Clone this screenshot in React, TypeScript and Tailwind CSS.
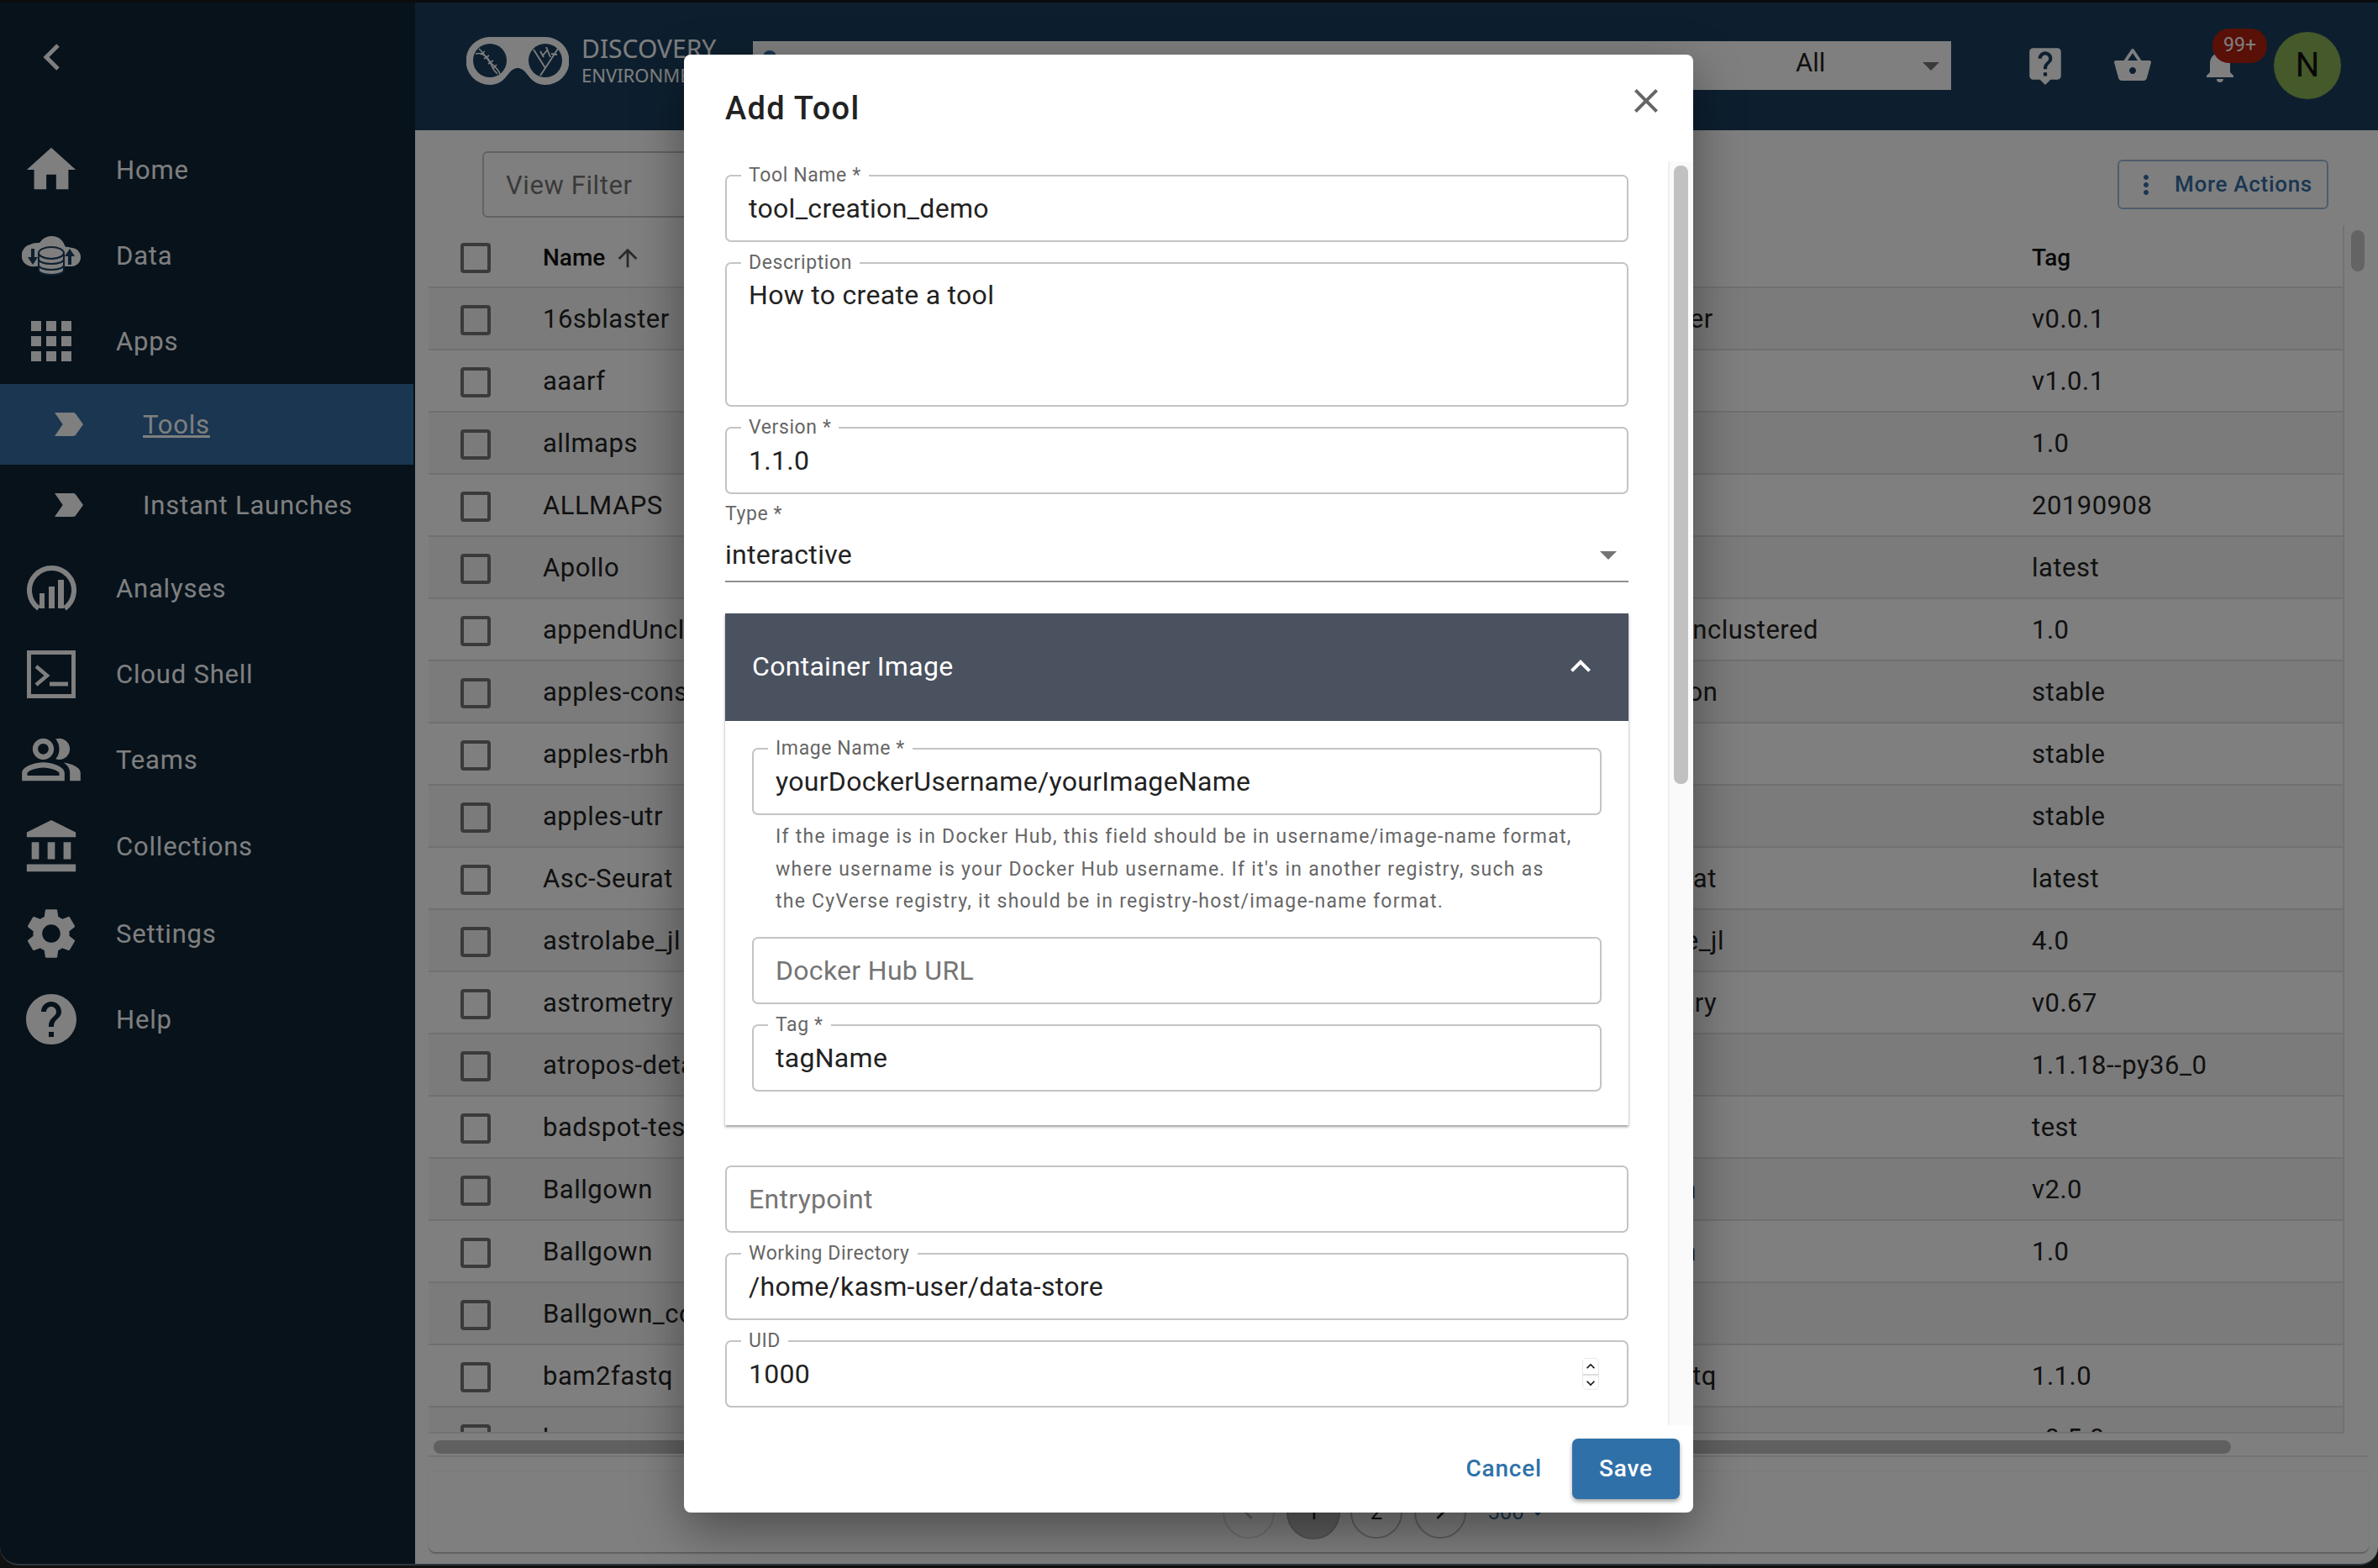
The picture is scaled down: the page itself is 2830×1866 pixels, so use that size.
import React from "react";
import {
  MdHome, MdApps, MdHelp, MdSettings, MdAccountBalance, MdOutlinePeopleAlt, MdLabelImportant,
  MdLiveHelp, MdShoppingBasket, MdNotifications, MdArrowUpward, MdClose, MdMoreVert, MdExpandLess,
  MdArrowDropDown, MdKeyboardArrowUp, MdKeyboardArrowDown, MdChevronLeft, MdChevronRight,
} from "react-icons/md";

const rows: [string, string, string][] = [
  ["16sblaster", "16sblaster", "v0.0.1"],
  ["aaarf", "", "v1.0.1"],
  ["allmaps", "", "1.0"],
  ["ALLMAPS", "", "20190908"],
  ["Apollo", "", "latest"],
  ["appendUnclustered", "appendUnclustered", "1.0"],
  ["apples-consensus", "apples-con", "stable"],
  ["apples-rbh", "", "stable"],
  ["apples-utr", "", "stable"],
  ["Asc-Seurat", "Asc-Seurat", "latest"],
  ["astrolabe_jl", "astrolabe_jl", "4.0"],
  ["astrometry", "astrometry", "v0.67"],
  ["atropos-details", "", "1.1.18--py36_0"],
  ["badspot-test", "", "test"],
  ["Ballgown", "Ballgown", "v2.0"],
  ["Ballgown", "Ballgown", "1.0"],
  ["Ballgown_container", "", ""],
  ["bam2fastq", "bam2fastq", "1.1.0"],
  ["barrnap", "", "v0.5.0"],
];

function Logo() {
  return (
    <svg width="122" height="58" viewBox="0 0 122 58" className="mb-[11px] shrink-0">
      <path fill="#fff" d="M28 0H94A28 28 0 0 1 94 57C84 57 78 52 72 44C68 39 65 37 61 37C57 37 54 39 50 44C44 52 38 57 28 57A28 28 0 0 1 28 0Z" />
      <circle cx="28" cy="28" r="20" fill="#1a3e5e" />
      <circle cx="94" cy="28" r="20" fill="#1a3e5e" />
      <g stroke="#fff" strokeWidth="1.6" fill="none">
        <path d="M15 14C22 20 24 26 28 30C32 34 38 38 40 44" />
        <path d="M11 20C18 18 22 22 26 26C30 32 30 38 37 44" />
        <path d="M17 21L22 17M21 26L27 22M26 32L32 28M31 38L36 33" />
      </g>
      <g stroke="#fff" strokeWidth="1.8" fill="none">
        <path d="M88 46L109 14" />
        <path d="M80 15L94 37M88 17L92 24M95 12L100 24M101 20L108 21M91 22L96 16" />
      </g>
    </svg>
  );
}

function DataIcon() {
  return (
    <svg width="70" height="47" viewBox="0 0 70 47">
      <path fill="#fff" d="M16 36A12 12 0 0 1 10 10C14 8 17 8 21 8C26 1 31 0 36 0C44 0 49 5 52 13C55 12 58 14 60 14A11 11 0 0 1 58 36Z" />
      <path fill="#1a3e5e" d="M11 15h4v10h4l-6 9l-6-9h4zM59 34h-4v-10h-4l6-9l6 9h-4z" />
      <ellipse cx="35" cy="20" rx="15" ry="7" fill="#fff" stroke="#1a3e5e" strokeWidth="2" />
      <path fill="#fff" stroke="#1a3e5e" strokeWidth="2" d="M20 20V40C20 44 27 46 35 46C43 46 50 44 50 40V20C50 24 43 27 35 27C27 27 20 24 20 20Z" />
      <path fill="none" stroke="#1a3e5e" strokeWidth="2" d="M20 27C20 31 27 33 35 33C43 33 50 31 50 27M20 34C20 38 27 40 35 40C43 40 50 38 50 34" />
    </svg>
  );
}

function AnalysesIcon() {
  return (
    <svg width="59" height="59" viewBox="0 0 59 59">
      <path fill="none" stroke="#fff" strokeWidth="6" d="M14 53A26.5 26.5 0 1 1 45 53" />
      <path fill="#fff" d="M15 35h6v18h-6zM26 27h7v26h-7zM37 19h7v34h-7z" />
    </svg>
  );
}

function ShellIcon() {
  return (
    <svg width="58" height="57" viewBox="0 0 58 57">
      <rect x="2.5" y="2.5" width="53" height="52" fill="none" stroke="#fff" strokeWidth="5" />
      <path fill="none" stroke="#fff" strokeWidth="4.5" d="M11 19L24 30L11 41" />
      <path fill="none" stroke="#fff" strokeWidth="5" d="M27 40H49" />
    </svg>
  );
}

function NavItem({ icon, label, tall }: { icon: React.ReactNode; label: string; tall?: boolean }) {
  return (
    <div className={tall ? "flex h-[105px] items-center" : "flex h-[102px] items-center"}>
      <div className="flex w-[122px] justify-center">{icon}</div>
      <span className="ml-[16px] mt-[2px] text-[31px] tracking-[0.8px] text-white">{label}</span>
    </div>
  );
}

function SubItem({ label, active }: { label: string; active?: boolean }) {
  return (
    <div className={active ? "flex h-[96px] w-[492px] items-center bg-[#346ca2] pl-[58px]" : "flex h-[96px] w-[492px] items-center pl-[58px]"}>
      <MdLabelImportant size={48} color="#fff" />
      <span className={active ? "ml-[64px] mt-[2px] text-[31px] tracking-[0.8px] text-white underline" : "ml-[64px] mt-[2px] text-[31px] tracking-[0.8px] text-white"}>{label}</span>
    </div>
  );
}

function Checkbox() {
  return <div className="h-[36px] w-[36px] rounded-[4px] border-[4px] border-[#757575]" />;
}

function TableRow({ name, mid, tag, odd }: { name: string; mid: string; tag: string; odd: boolean }) {
  return (
    <div className={odd ? "flex h-[74px] shrink-0 items-center border-b-2 border-[#e0e0e0] bg-[#f6f6f6] pt-[3px] text-[31px] tracking-[0.5px] text-[#222]" : "flex h-[74px] shrink-0 items-center border-b-2 border-[#e0e0e0] pt-[3px] text-[31px] tracking-[0.5px] text-[#222]"}>
      <div className="w-[136px] pl-[38px]"><Checkbox /></div>
      <div className="w-[1242px] whitespace-nowrap">{name}</div>
      <div className="w-[530px] whitespace-nowrap">{mid}</div>
      <div className="whitespace-nowrap">{tag}</div>
    </div>
  );
}

function Field({ label, value, placeholder, tall, right }: { label?: string; value?: string; placeholder?: string; tall?: boolean; right?: React.ReactNode }) {
  return (
    <div className={tall ? "relative h-[172px] rounded-[7px] border-2 border-[#c4c4c4] px-[26px] pt-[13px]" : "relative flex h-[80px] items-center justify-between rounded-[7px] border-2 border-[#c4c4c4] px-[26px]"}>
      {label ? <span className="absolute left-[17px] top-[-14px] bg-white px-[9px] text-[23px] leading-[26px] tracking-[0.6px] text-[#666] whitespace-nowrap">{label}</span> : null}
      {placeholder ? <span className="text-[32px] tracking-[0.3px] text-[#757575]">{placeholder}</span> : <span className="text-[32px] tracking-[0.3px] text-[#222]">{value}</span>}
      {right}
    </div>
  );
}

function Spinner() {
  return (
    <div className="mr-[7px] flex h-[38px] w-[20px] flex-col items-center justify-between overflow-hidden rounded-[5px] border border-[#e8e8e8] bg-white text-[#111]">
      <MdKeyboardArrowUp size={20} className="-my-[1px] shrink-0" />
      <div className="h-[2px] w-full shrink-0 bg-[#ddd]" />
      <MdKeyboardArrowDown size={20} className="-my-[1px] shrink-0" />
    </div>
  );
}

export default function App() {
  return (
    <div className="relative h-[1866px] w-[2830px] overflow-hidden bg-[#222] font-[family-name:Roboto,sans-serif]">
      <div className="flex h-[1863px] w-full overflow-hidden rounded-b-[22px] border-t-[3px] border-b-2 border-t-[#16181a] border-b-[#5f6c78] bg-white">
        {/* Sidebar */}
        <aside className="w-[494px] shrink-0 bg-[#0e2436]">
          <div className="flex h-[148px] items-start pl-[50px] pt-[48px]">
            <svg width="22" height="34" viewBox="0 0 22 34"><path d="M19 3L5 17L19 31" fill="none" stroke="#fff" strokeWidth="5" /></svg>
          </div>
          <NavItem icon={<MdHome size={70} color="#fff" />} label="Home" />
          <NavItem icon={<DataIcon />} label="Data" />
          <NavItem icon={<MdApps size={72} color="#fff" />} label="Apps" />
          <SubItem label="Tools" active />
          <SubItem label="Instant Launches" />
          <NavItem icon={<AnalysesIcon />} label="Analyses" />
          <NavItem icon={<ShellIcon />} label="Cloud Shell" />
          <NavItem icon={<MdOutlinePeopleAlt size={76} color="#fff" />} label="Teams" />
          <NavItem tall icon={<MdAccountBalance size={70} color="#fff" />} label="Collections" />
          <NavItem icon={<MdSettings size={72} color="#fff" />} label="Settings" />
          <NavItem icon={<MdHelp size={72} color="#fff" />} label="Help" />
        </aside>

        {/* Main */}
        <main className="flex min-w-0 flex-1 flex-col">
          <header className="flex h-[152px] shrink-0 items-center bg-[#1a3e5e] pb-[2px] pl-[61px]">
            <Logo />
            <div className="mb-[13px] ml-[15px] w-[204px] whitespace-nowrap font-[family-name:'Noto_Sans',sans-serif] text-white">
              <div className="text-[30px] leading-[34px]">DISCOVERY</div>
              <div className="text-[22px] leading-[28px]">ENVIRONMENT</div>
            </div>
            <div className="relative flex h-[58px] w-[1426px] items-center bg-white">
              <div className="absolute left-[12px] top-[11px] h-[22px] w-[16px] rounded-full bg-[#346ca2]" />
              <span className="mb-[6px] ml-[1241px] text-[31px] text-[#222]">All</span>
              <MdArrowDropDown size={48} color="#757575" className="ml-auto" />
            </div>
            <MdLiveHelp size={50} color="#fff" className="ml-[87px]" />
            <MdShoppingBasket size={48} color="#fff" className="ml-[55px]" />
            <div className="relative ml-[56px]">
              <MdNotifications size={48} color="#fff" />
              <span className="absolute left-[15px] top-[-20px] flex h-[41px] w-[65px] items-center justify-center rounded-[20px] bg-[#b0200e] text-[23px] text-white">99+</span>
            </div>
            <div className="ml-[40px] flex h-[80px] w-[80px] items-center justify-center rounded-full bg-[#8bb255] text-[40px] text-[#111]">N</div>
          </header>

          <div className="flex min-h-0 flex-1 flex-col pl-[16px] pr-[11px]">
            <div className="flex h-[113px] shrink-0 items-start justify-between">
              <div className="ml-[64px] mt-[25px] flex h-[79px] w-[700px] items-center rounded-[6px] border-2 border-[#c4c4c4] pl-[26px] pt-[4px] text-[31px] tracking-[0.6px] text-[#757575]">View Filter</div>
              <div className="mr-[48px] mt-[35px] flex h-[59px] w-[251px] items-center rounded-[6px] border-2 border-[#9fbbd6] pl-[14px] text-[26px] font-medium tracking-[0.7px] text-[#346ca2]">
                <MdMoreVert size={36} className="mr-[16px]" />
                More Actions
              </div>
            </div>

            <div className="flex h-[1466px] shrink-0 flex-col border-b-2 border-[#e8e8e8]">
              <div className="flex min-h-0">
                <div className="flex h-[1438px] w-[2280px] flex-col overflow-hidden border-b-2 border-r-2 border-[#e4e4e4]">
                  <div className="flex h-[75px] shrink-0 items-center border-b-2 border-[#e0e0e0] pt-[5px] text-[28px] font-medium text-[#111]">
                    <div className="w-[136px] pl-[38px]"><Checkbox /></div>
                    <div className="flex w-[1242px] items-center">Name<MdArrowUpward size={34} className="ml-[10px] text-[#555]" /></div>
                    <div className="w-[530px]" />
                    <div>Tag</div>
                  </div>
                  {rows.map((r, i) => (
                    <TableRow key={i} name={r[0]} mid={r[1]} tag={r[2]} odd={i % 2 === 0} />
                  ))}
                </div>
                <div className="flex-1 pl-[8px] pt-[6px]">
                  <div className="h-[49px] w-[16px] rounded-[8px] bg-[#c8c8c8]" />
                </div>
              </div>
              <div className="ml-[6px] mt-[8px] h-[16px] w-[2139px] rounded-[8px] bg-[#c1c1c1]" />
            </div>

            <div className="mt-[16px] flex h-[97px] shrink-0 items-center justify-center rounded-b-[8px] border-t-2 border-t-[#f8f8f8] pr-[28px] shadow-[0_2px_1px_rgba(0,0,0,0.25)]">
              <div className="flex h-[62px] w-[62px] items-center justify-center rounded-full border-2 border-[#e0e0e0] text-[#bbb]"><MdChevronLeft size={32} /></div>
              <div className="ml-[14px] flex h-[64px] w-[64px] items-center justify-center rounded-full border-2 border-[#aaa] bg-[#bdbdbd] text-[26px] text-[#222]">1</div>
              <div className="ml-[12px] flex h-[62px] w-[62px] items-center justify-center rounded-full border-2 border-[#bfbfbf] text-[26px] text-[#222]">2</div>
              <div className="ml-[14px] flex h-[62px] w-[62px] items-center justify-center rounded-full border-2 border-[#bfbfbf] text-[#222]"><MdChevronRight size={32} /></div>
              <span className="ml-[25px] text-[26px] text-[#346ca2]">500</span>
              <MdArrowDropDown size={32} className="text-[#346ca2]" />
            </div>
          </div>
        </main>
      </div>

      {/* Dim overlay */}
      <div className="absolute inset-0 bg-black/50" />

      {/* Dialog */}
      <div className="absolute left-[814px] top-[65px] flex h-[1735px] w-[1201px] flex-col overflow-hidden rounded-[8px] bg-white shadow-[0_20px_60px_rgba(0,0,0,0.4)]">
        <div className="flex h-[127px] shrink-0 items-start justify-between pl-[49px] pr-[32px]">
          <span className="mt-[39px] text-[38px] font-medium leading-[50px] tracking-[1.3px] text-[#222]">Add Tool</span>
          <MdClose size={48} color="#666" className="mt-[31px]" />
        </div>

        <div className="flex min-h-0 flex-1">
          <div className="w-[1171px] shrink-0 overflow-hidden pl-[49px] pr-[47px] pt-[16px]">
            <Field label="Tool Name *" value="tool_creation_demo" />
            <div className="mt-[24px]"><Field tall label="Description" value="How to create a tool" /></div>
            <div className="mt-[24px]"><Field label="Version *" value="1.1.0" /></div>

            <div className="h-[105px] border-b-2 border-[#8f8f8f]">
              <div className="pt-[10px] text-[23px] leading-[28px] tracking-[0.6px] text-[#666]">Type *</div>
              <div className="mt-[10px] flex items-center justify-between text-[32px] leading-[44px] tracking-[0.3px] text-[#222]">
                interactive
                <MdArrowDropDown size={48} color="#757575" />
              </div>
            </div>

            <div className="mt-[37px] bg-white shadow-[0_2px_3px_rgba(0,0,0,0.4)]">
              <div className="flex h-[128px] items-center justify-between bg-[#4a5260] pb-[2px] pl-[32px] pr-[33px] text-[32px] tracking-[0.3px] text-white">
                Container Image
                <MdExpandLess size={48} color="#fff" />
              </div>
              <div className="px-[32px] pb-[40px] pt-[32px]">
                <Field label="Image Name *" value="yourDockerUsername/yourImageName" />
                <div className="mt-[7px] pl-[28px] text-[23px] leading-[38.5px] tracking-[1.25px] text-[#666]">
                  <div className="whitespace-nowrap">If the image is in Docker Hub, this field should be in username/image-name format,</div>
                  <div className="whitespace-nowrap">where username is your Docker Hub username. If it's in another registry, such as</div>
                  <div className="whitespace-nowrap">the CyVerse registry, it should be in registry-host/image-name format.</div>
                </div>
                <div className="mt-[22px]"><Field placeholder="Docker Hub URL" /></div>
                <div className="mt-[24px]"><Field label="Tag *" value="tagName" /></div>
              </div>
            </div>

            <div className="mt-[48px]"><Field placeholder="Entrypoint" /></div>
            <div className="mt-[24px]"><Field label="Working Directory" value="/home/kasm-user/data-store" /></div>
            <div className="mt-[24px]"><Field label="UID" value="1000" right={<Spinner />} /></div>
          </div>
          <div className="flex-1 border-l-2 border-[#efefef] bg-[#fafafa] pl-[5px] pt-[5px]">
            <div className="h-[736px] w-[17px] rounded-[8px] bg-[#c1c1c1]" />
          </div>
        </div>

        <div className="flex h-[104px] shrink-0 items-start justify-end pr-[16px] pt-[16px]">
          <span className="mr-[36px] flex h-[72px] items-center text-[28px] font-medium tracking-[0.8px] text-[#2f72a9]">Cancel</span>
          <span className="flex h-[72px] w-[128px] items-center justify-center rounded-[7px] bg-[#3070a8] text-[28px] font-medium tracking-[0.8px] text-white shadow-[0_3px_5px_rgba(0,0,0,0.35)]">Save</span>
        </div>
      </div>
    </div>
  );
}
